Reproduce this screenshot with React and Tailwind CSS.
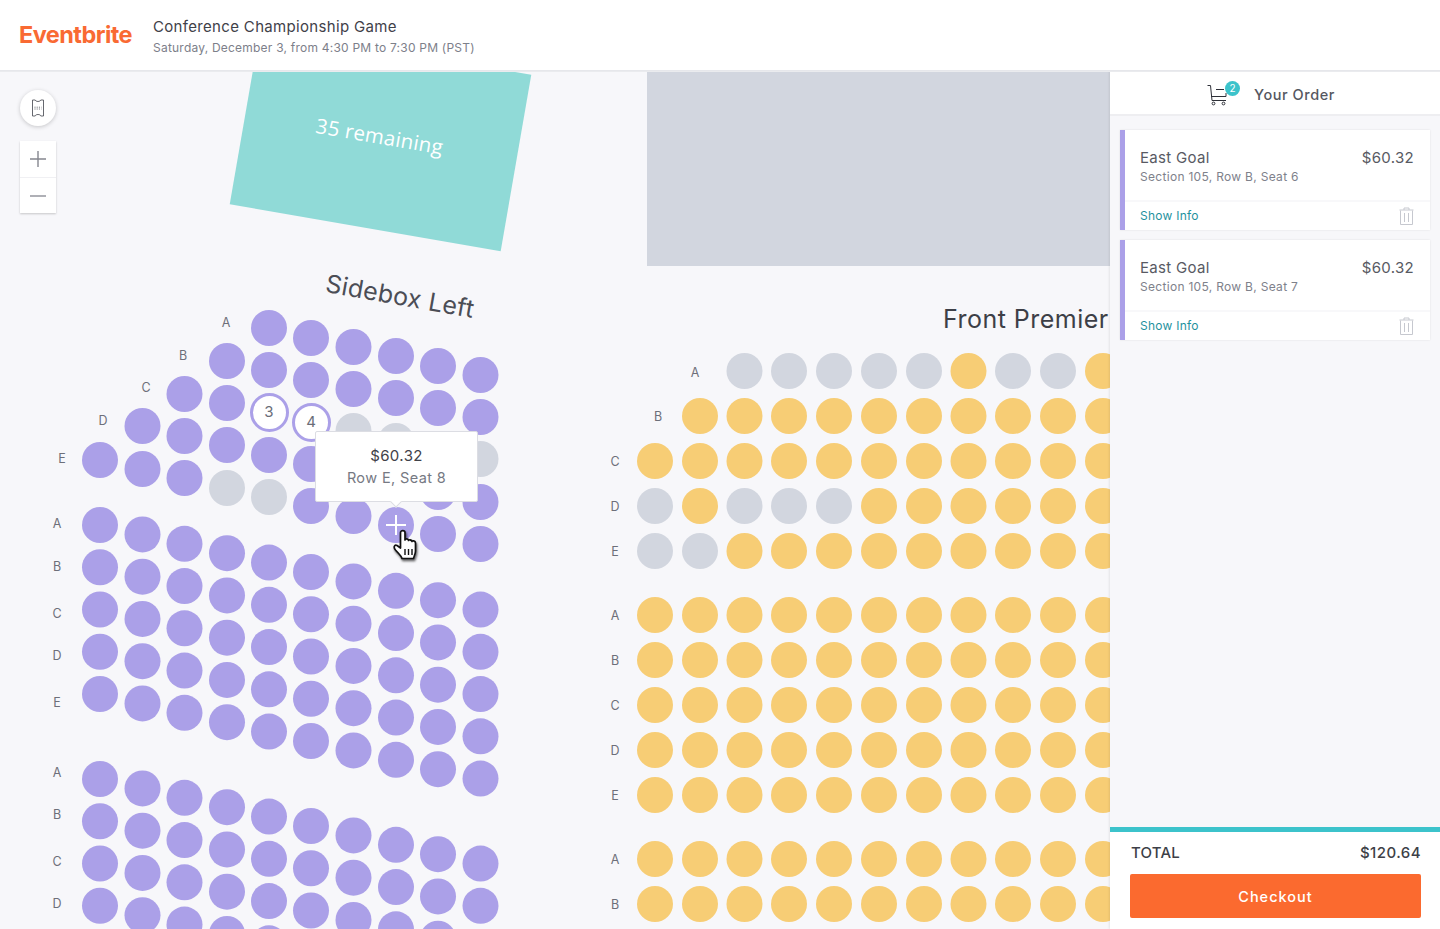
const PURPLE = '#aba0e8';
const YELLOW = '#f7cd75';
const GRAY = '#d2d6df';

// section seats: [x, first y of the column, number of rows]
const LEFT_X = [100, 142.5, 184.5, 227, 269, 311, 353.5, 396, 438, 480.5];
const TOP_BLOCK = {
  100: [460],
  142.5: [426, 469],
  184.5: [394, 436, 478],
  227: [361, 403, 445, 488],
  269: [328, 370, 412, 455, 497],
  311: [338, 380, 422, 464, 506],
  353.5: [347, 389, 431, 473, 516],
  396: [356, 398, 441, 483, 525],
  438: [366, 408, 450, 492, 534],
  480.5: [375, 417, 459, 502, 544],
};
const GRAY_LEFT = ['227-488', '269-497', '353.5-431', '396-441', '480.5-459'];
const SPECIAL = ['269-412', '311-422', '396-525'];

const RIGHT_X = [655, 700, 744.5, 789, 834, 879, 924, 968.5, 1013, 1058, 1103];
const RIGHT_Y = [371, 416, 461, 506, 551, 615, 660, 705, 750, 795, 859, 904];
const RIGHT_GRAY = [
  '744.5-371', '789-371', '834-371', '879-371', '924-371', '1013-371', '1058-371',
  '655-506', '744.5-506', '789-506', '834-506', '655-551', '700-551',
];

const LABELS = [
  ['A', 226, 322], ['B', 183, 355], ['C', 146, 387], ['D', 103, 420], ['E', 62, 458],
  ['A', 57, 523], ['B', 57, 566], ['C', 57, 613], ['D', 57, 655], ['E', 57, 702],
  ['A', 57, 772], ['B', 57, 814], ['C', 57, 861], ['D', 57, 903],
  ['A', 695, 372], ['B', 658, 416], ['C', 615, 461], ['D', 615, 506], ['E', 615, 551],
  ['A', 615, 615], ['B', 615, 660], ['C', 615, 705], ['D', 615, 750], ['E', 615, 795],
  ['A', 615, 859], ['B', 615, 904],
];

function buildSeats() {
  const seats = [];
  LEFT_X.forEach((x, i) => {
    TOP_BLOCK[x].forEach((y) => {
      const key = `${x}-${y}`;
      if (SPECIAL.includes(key)) return;
      seats.push({ x, y, color: GRAY_LEFT.includes(key) ? GRAY : PURPLE });
    });
    // the two lower blocks step down by the same slope
    const y2 = 525 + i * 9.4;
    const y3 = 779 + i * 9.4;
    for (let r = 0; r < 5; r++) seats.push({ x, y: y2 + r * 42.25, color: PURPLE });
    for (let r = 0; r < 4; r++) seats.push({ x, y: y3 + r * 42.25, color: PURPLE });
  });
  RIGHT_Y.forEach((y) => {
    RIGHT_X.forEach((x) => {
      if (y === 371 && x < 744) return;
      if (y === 416 && x < 700) return;
      seats.push({ x, y, color: RIGHT_GRAY.includes(`${x}-${y}`) ? GRAY : YELLOW });
    });
  });
  return seats;
}

function Seat({ x, y, color }) {
  return (
    <div
      className="absolute left-0 top-0 h-9 w-9 rounded-full"
      style={{ transform: `translate(${x - 18}px, ${y - 71 - 18}px)`, background: color }}
    />
  );
}

function PickedSeat({ x, y, n }) {
  return (
    <div
      className="absolute flex h-[39px] w-[39px] items-center justify-center rounded-full border-[3px] border-[#aba0e8] bg-white pt-px text-[15px] text-[#6a6d78]"
      style={{ left: x - 19.5, top: y - 71 - 19.5 }}
    >
      {n}
    </div>
  );
}

function TicketIcon() {
  return (
    <svg width="14" height="18" viewBox="0 0 14 18" fill="none" stroke="#55575f" strokeWidth="0.9">
      <path d="M1.5 1H4.2C4.5 3 9.5 3 9.8 1H12.5V17H9.8C9.5 15 4.5 15 4.2 17H1.5Z" />
      <path d="M3.5 8.2H10.5M3.5 10H10.5" strokeDasharray="1 1.2" />
    </svg>
  );
}

function CartIcon() {
  return (
    <svg width="22" height="22" viewBox="0 0 22 22" fill="none" stroke="#2e3038" strokeWidth="1">
      <path d="M0.5 1.5H3.5L5 16.5H19" />
      <path d="M4 12.5H19V9" />
      <path d="M9 5.5H17" />
      <circle cx="6.5" cy="19.5" r="1.4" />
      <circle cx="16.5" cy="19.5" r="1.4" />
    </svg>
  );
}

function TrashIcon() {
  return (
    <svg width="15" height="18" viewBox="0 0 15 18" fill="none" stroke="#c6c8cf" strokeWidth="1">
      <path d="M1.5 3.5V17.5H13.5V3.5" />
      <path d="M0.5 3H14.5" />
      <path d="M5 3V1H10V3" />
      <path d="M5.5 6V15M9.5 6V15" />
    </svg>
  );
}

function HandCursor() {
  return (
    <svg width="26" height="33" viewBox="0 0 26 33" className="drop-shadow-[1px_2px_1px_rgba(0,0,0,0.6)]">
      <path
        d="M8.500 3.500C8.500 1 13 1 13 3.500V11C13 9.500 16.500 9.500 16.500 11.500C16.500 10.500 20 10.500 20 12.500C20 11.500 23.500 11.500 23.500 14V22C23.500 25 22 27 21.500 29.500H10C9.500 27 7 25 3.500 21C1 18 2.500 15.500 5 16.500L8.500 19Z"
        fill="#fff"
        stroke="#111"
        strokeWidth="1.7"
        strokeLinejoin="round"
      />
      <path d="M13 20V26M16.500 20V26M20 20V26" stroke="#111" strokeWidth="1.4" />
    </svg>
  );
}

function OrderCard({ seat }) {
  return (
    <div className="flex h-[100px] flex-col border-l-[5px] border-[#aba0e8] bg-white shadow-[0_0_2px_rgba(0,0,0,0.1)]">
      <div className="flex flex-1 justify-between pl-[15px] pr-4 pt-[19px]">
        <div>
          <div className="text-[15px] leading-[18px] tracking-[0.3px] text-[#585a63]">East Goal</div>
          <div className="mt-[2px] text-[12px] leading-4 tracking-[0.3px] text-[#7e818b]">
            Section 105, Row B, Seat {seat}
          </div>
        </div>
        <div className="text-[15px] leading-[18px] tracking-[0.33px] text-[#585a63]">$60.32</div>
      </div>
      <div className="flex h-[30px] items-center justify-between border-t-2 border-[#f8f8fa] pl-[15px] pr-4">
        <span className="text-[12px] tracking-[0.25px] text-[#1f929e]">Show Info</span>
        <TrashIcon />
      </div>
    </div>
  );
}

export default function App() {
  const seats = buildSeats();

  return (
    <div className="flex h-screen flex-col overflow-hidden bg-[#f7f7fa] font-['Inter',sans-serif]">
      <header className="relative z-20 flex h-[71px] shrink-0 items-center border-b border-[#e6e7eb] bg-white pl-[19px] shadow-[0_1px_0_#eaebee]">
        <div className="w-[134px] text-[23.5px] font-bold leading-none tracking-[-0.55px] text-[#f96a33]">Eventbrite</div>
        <div className="pt-[2px]">
          <div className="text-[15px] leading-5 tracking-[0.33px] text-[#3f4149]">Conference Championship Game</div>
          <div className="mt-[3px] text-[12px] leading-4 tracking-[0.22px] text-[#7d808a]">
            Saturday, December 3, from 4:30 PM to 7:30 PM (PST)
          </div>
        </div>
      </header>

      <div className="flex min-h-0 flex-1">
        <main className="relative min-w-0 flex-1 overflow-hidden">
          <div className="absolute left-[647px] top-0 h-[195px] w-[470px] bg-[#d2d6df]" />
          <div className="absolute left-[243px] top-[-21px] flex h-[179px] w-[275px] rotate-[9.84deg] items-center justify-center bg-[#90dad7] pb-[6px] pr-[3px] text-[20.500px] tracking-[0.25px] text-white">
            <span className="font-['Open_Sans',sans-serif]">35 remaining</span>
          </div>

          <div className="absolute left-[325px] top-[209px] rotate-[10deg] text-[25px] leading-8 tracking-[0.22px] text-[#4b4d55]">
            Sidebox Left
          </div>
          <div className="absolute left-[943px] top-[232px] whitespace-nowrap text-[25px] leading-8 tracking-[0.47px] text-[#3d3f47]">
            Front Premier
          </div>

          {seats.map((s, i) => (
            <Seat key={i} {...s} />
          ))}
          {LABELS.map(([t, x, y], i) => (
            <span
              key={i}
              className="absolute w-4 text-center text-[12.500px] leading-4 text-[#6d6f79]"
              style={{ left: x - 8, top: y - 71 - 7 }}
            >
              {t}
            </span>
          ))}

          <PickedSeat x={269} y={412} n={3} />
          <PickedSeat x={311} y={422} n={4} />

          <div className="absolute left-[378px] top-[436px] flex h-9 w-9 items-center justify-center rounded-full bg-[#aba0e8]">
            <svg width="22" height="22" viewBox="0 0 22 22" stroke="#fff" strokeWidth="2">
              <path d="M11 1V21M1 11H21" />
            </svg>
          </div>

          <div className="absolute left-[315px] top-[360px] flex h-[71px] w-[163px] flex-col items-center justify-center rounded-[2px] border border-[#dcdde3] bg-white">
            <div className="text-[15px] leading-5 tracking-[0.4px] text-[#3f4149]">$60.32</div>
            <div className="mt-[2px] text-[14.500px] leading-5 tracking-[0.38px] text-[#767983]">Row E, Seat 8</div>
            <div className="absolute bottom-[-5px] left-[76px] h-2 w-2 rotate-45 border-b border-r border-[#dcdde3] bg-white" />
          </div>

          <div className="absolute left-[392px] top-[458px]">
            <HandCursor />
          </div>

          {/* map controls */}
          <button className="absolute left-5 top-[19px] flex h-9 w-9 items-center justify-center rounded-full bg-white shadow-[0_1px_4px_rgba(0,0,0,0.2)]">
            <TicketIcon />
          </button>
          <div className="absolute left-5 top-[70px] flex w-9 flex-col bg-white shadow-[0_1px_2px_rgba(0,0,0,0.2)]">
            <div className="flex h-[37px] items-center justify-center border-b border-[#f0f0f3]">
              <svg width="16" height="16" viewBox="0 0 16 16" stroke="#85878f" strokeWidth="1.4">
                <path d="M8 0V16M0 8H16" />
              </svg>
            </div>
            <div className="flex h-[35px] items-center justify-center">
              <svg width="16" height="2" viewBox="0 0 16 2" stroke="#9b9da4" strokeWidth="1.6">
                <path d="M0 1H16" />
              </svg>
            </div>
          </div>
        </main>

        <aside className="relative z-10 flex w-[330px] shrink-0 flex-col bg-[#f7f7fa] shadow-[-1px_0_2px_rgba(0,0,0,0.08)]">
          <div className="flex h-[45px] shrink-0 items-center justify-center border-b-2 border-[#eeeef1] bg-white pr-2 pt-1">
            <div className="relative mr-[25px]">
              <CartIcon />
              <span className="absolute right-[-11px] top-[-3px] flex h-[15px] w-[15px] items-center justify-center rounded-full bg-[#3cc3cb] text-[10px] text-white">
                2
              </span>
            </div>
            <span className="text-[14.500px] font-medium tracking-[0.55px] text-[#55575f]">Your Order</span>
          </div>

          <div className="flex flex-1 flex-col gap-[10px] px-[10px] pt-[14px]">
            <OrderCard seat={6} />
            <OrderCard seat={7} />
          </div>

          <div className="shrink-0 border-t-[5px] border-[#3cc3cb] bg-white pb-[11px] pl-5 pr-[19px]">
            <div className="flex h-[42px] items-center justify-between pl-[1px] text-[15px] font-medium text-[#3d3f47]">
              <span className="tracking-[0.2px]">TOTAL</span>
              <span className="tracking-[0.45px]">$120.64</span>
            </div>
            <button className="h-[44px] w-full rounded-[2px] bg-[#fb6a2f] pt-[1px] text-[14.500px] font-medium tracking-[1px] text-white">
              Checkout
            </button>
          </div>
        </aside>
      </div>
    </div>
  );
}
